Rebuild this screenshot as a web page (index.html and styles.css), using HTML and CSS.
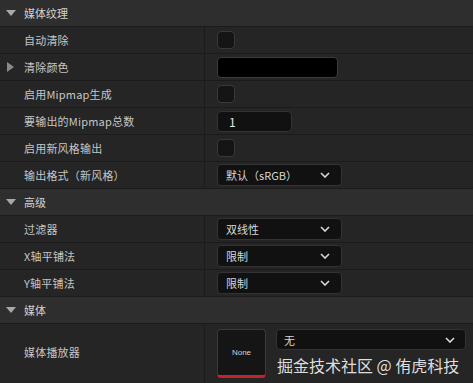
FILE: index.html
```html
<!DOCTYPE html>
<html lang="zh-CN">
<head>
    <meta charset="UTF-8">
    <meta name="viewport" content="width=device-width, initial-scale=1.0">
    <title>媒体纹理</title>
    <link rel="stylesheet" href="styles.css">
</head>
<body>
    <div class="panel">
        <div class="cat"><span class="tri-down"></span>媒体纹理</div>

        <div class="row">
            <div class="name">自动清除</div>
            <div class="value"><span class="chk"></span></div>
        </div>
        <div class="row">
            <div class="name"><span class="tri-right"></span>清除颜色</div>
            <div class="value"><span class="color"></span></div>
        </div>
        <div class="row">
            <div class="name">启用Mipmap生成</div>
            <div class="value"><span class="chk"></span></div>
        </div>
        <div class="row">
            <div class="name">要输出的Mipmap总数</div>
            <div class="value"><span class="num">1</span></div>
        </div>
        <div class="row">
            <div class="name">启用新风格输出</div>
            <div class="value"><span class="chk"></span></div>
        </div>
        <div class="row">
            <div class="name">输出格式（新风格）</div>
            <div class="value">
                <span class="combo"><span>默认（sRGB）</span><svg class="chev" viewBox="0 0 10 6"><path d="M1 1 L5 5 L9 1"/></svg></span>
            </div>
        </div>

        <div class="cat"><span class="tri-down"></span>高级</div>

        <div class="row">
            <div class="name">过滤器</div>
            <div class="value">
                <span class="combo"><span>双线性</span><svg class="chev" viewBox="0 0 10 6"><path d="M1 1 L5 5 L9 1"/></svg></span>
            </div>
        </div>
        <div class="row">
            <div class="name">X轴平铺法</div>
            <div class="value">
                <span class="combo"><span>限制</span><svg class="chev" viewBox="0 0 10 6"><path d="M1 1 L5 5 L9 1"/></svg></span>
            </div>
        </div>
        <div class="row">
            <div class="name">Y轴平铺法</div>
            <div class="value">
                <span class="combo"><span>限制</span><svg class="chev" viewBox="0 0 10 6"><path d="M1 1 L5 5 L9 1"/></svg></span>
            </div>
        </div>

        <div class="cat"><span class="tri-down"></span>媒体</div>

        <div class="row big">
            <div class="name">媒体播放器</div>
            <div class="value asset">
                <div class="thumb">None</div>
                <div class="asset-side">
                    <span class="combo wide"><span>无</span><svg class="chev" viewBox="0 0 10 6"><path d="M1 1 L5 5 L9 1"/></svg></span>
                    <div class="mark">掘金技术社区 @ 侑虎科技</div>
                </div>
            </div>
        </div>
    </div>
</body>
</html>
```

FILE: styles.css
```css
*{
    margin: 0;
    padding: 0;
    box-sizing: border-box;
}
body{
    background: #242424;
    font-family: "Noto Sans CJK SC", "Noto Sans", sans-serif;
    font-size: 11px;
    color: #c6c6c6;
}
.panel{
    width: 473px;
    height: 383px;
    overflow: hidden;
}

/* category header */
.cat{
    height: 27px;
    background: #2e2e2e;
    border-bottom: 1px solid #1b1b1b;
    display: flex;
    align-items: center;
    padding-left: 6px;
    color: #d2d2d2;
}
.tri-down{
    width: 0;
    height: 0;
    border-left: 5px solid transparent;
    border-right: 5px solid transparent;
    border-top: 6px solid #a8a8a8;
    margin-right: 8px;
}
.tri-right{
    position: absolute;
    left: 7px;
    top: 8px;
    width: 0;
    height: 0;
    border-top: 5px solid transparent;
    border-bottom: 5px solid transparent;
    border-left: 7px solid #8a8a8a;
}

/* property row */
.row{
    height: 27px;
    display: flex;
    background: #252525;
    border-bottom: 1px solid #1b1b1b;
}
.name{
    position: relative;
    flex-shrink: 0;
    width: 205px;
    border-right: 1px solid #1b1b1b;
    padding-left: 24px;
    display: flex;
    align-items: center;
    letter-spacing: 0.2px;
}
.value{
    flex: 1;
    min-width: 0;
    padding-left: 12px;
    display: flex;
    align-items: center;
}

.chk{
    width: 18px;
    height: 18px;
    background: #151515;
    border: 1px solid #393939;
    border-radius: 4px;
}
.color{
    width: 121px;
    height: 21px;
    background: #000;
    border: 1px solid #3c3c3c;
    border-radius: 4px;
}
.num{
    width: 75px;
    height: 21px;
    background: #111;
    border: 1px solid #333;
    border-radius: 4px;
    padding-left: 11px;
    line-height: 19px;
    color: #e4e4e4;
    font-size: 12px;
}
.combo{
    width: 125px;
    height: 22px;
    background: #111;
    border: 1px solid #333;
    border-radius: 4px;
    padding: 0 11px 0 8px;
    display: flex;
    align-items: center;
    justify-content: space-between;
    color: #d6d6d6;
}
.chev{
    width: 10px;
    height: 6px;
    fill: none;
    stroke: #d8d8d8;
    stroke-width: 1.6;
}

/* media player row */
.big{
    height: 60px;
    align-items: stretch;
}
.big .name{
    padding-bottom: 4px;
}
.asset{
    align-items: flex-start;
    padding-top: 5px;
    gap: 10px;
}
.thumb{
    flex-shrink: 0;
    width: 49px;
    height: 49px;
    background: #151515;
    border: 1px solid #3a3a3a;
    border-bottom: 3px solid #c0242c;
    border-radius: 4px;
    display: flex;
    align-items: center;
    justify-content: center;
    font-family: "Liberation Sans", sans-serif;
    font-size: 8px;
    color: #d0d0d0;
}
.asset-side{
    flex: 1;
    min-width: 0;
}
.combo.wide{
    width: 190px;
    height: 21px;
    padding-left: 7px;
    padding-right: 10px;
}
.mark{
    margin-top: 4px;
    padding-left: 1px;
    font-size: 16px;
    line-height: 22px;
    color: #dedede;
    white-space: nowrap;
}
```
